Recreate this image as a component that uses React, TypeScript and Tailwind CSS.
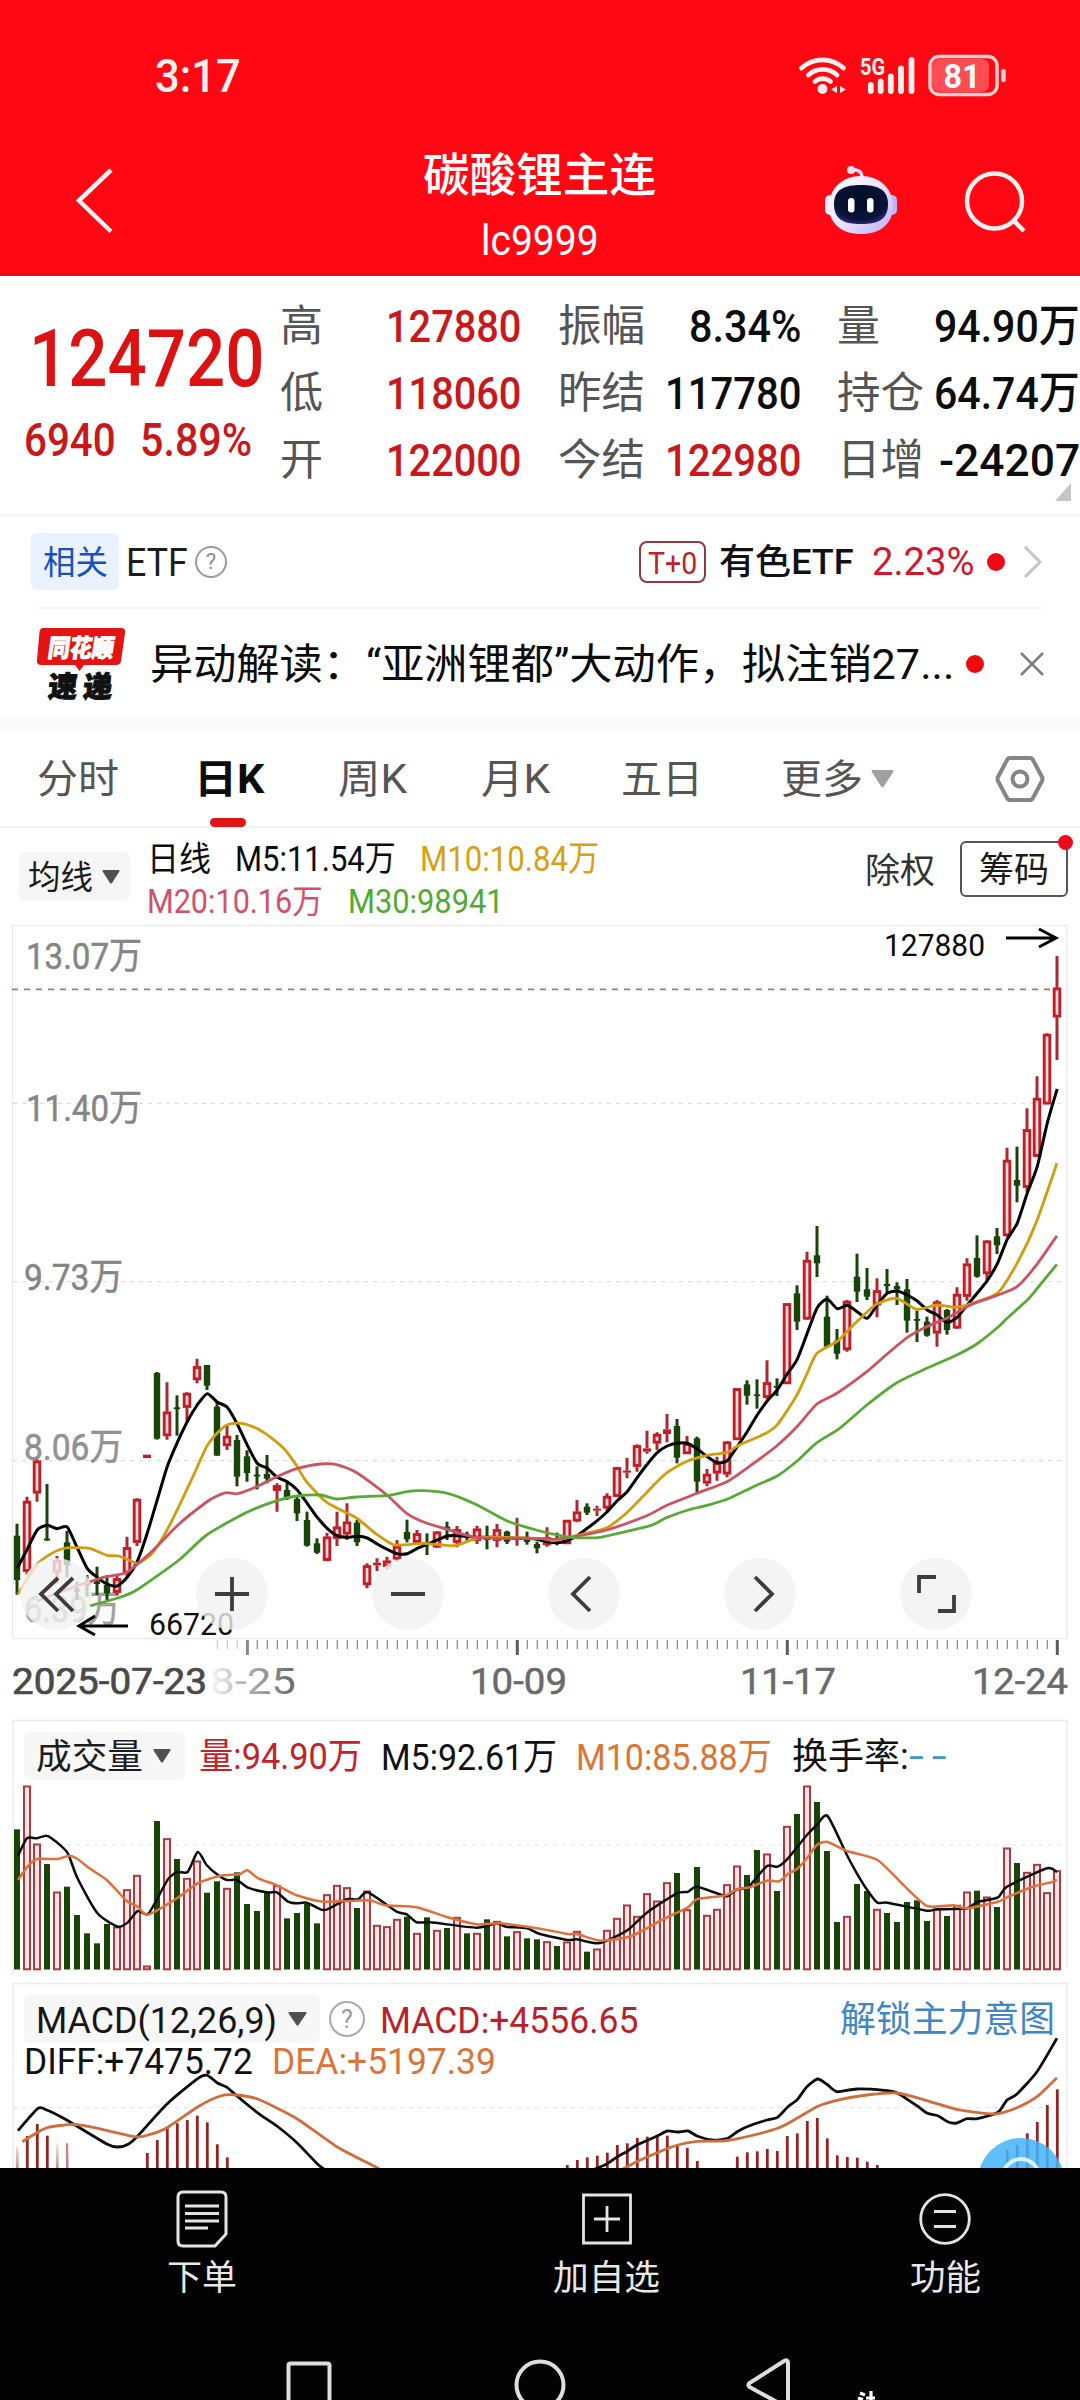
import React, { useLayoutEffect, useRef } from "react";

/** Text squeezed or stretched horizontally to the width given by its classes. */
function Fit({ children, className }: { children: string; className: string }) {
  const outer = useRef<HTMLSpanElement>(null);
  const inner = useRef<HTMLSpanElement>(null);
  useLayoutEffect(() => {
    const o = outer.current;
    const i = inner.current;
    if (o && i && i.offsetWidth > 0) {
      i.style.transform = `translateY(1px) scaleX(${o.clientWidth / i.offsetWidth})`;
    }
  });
  return (
    <span ref={outer} className={`block shrink-0 h-[1em] leading-none ${className}`}>
      <span ref={inner} className="inline-block origin-left whitespace-pre leading-none">
        {children}
      </span>
    </span>
  );
}

/* ---------- chart data ---------- */

type Candle = [string, number, number, number, number];

// colour, high, body top, body bottom, low (third-pixels below y = 1300)
const candles: Candle[] = [
  ["G", 671, 707, 840, 884], ["R", 590, 603, 815, 825], ["R", 478, 482, 580, 605], ["G", 552, 716, 721, 722],
  ["R", 768, 780, 818, 850], ["G", 693, 727, 795, 832], ["G", 845, 868, 875, 900], ["G", 825, 850, 855, 890],
  ["G", 800, 844, 852, 885], ["G", 825, 855, 880, 900], ["R", 825, 835, 878, 885], ["R", 710, 742, 820, 830],
  ["R", 595, 597, 728, 738], ["R", 464, 464, 474, 474], ["G", 216, 219, 416, 419], ["R", 247, 335, 408, 419],
  ["G", 286, 322, 326, 407], ["R", 277, 279, 323, 365], ["R", 176, 199, 240, 250], ["G", 195, 195, 257, 270],
  ["G", 305, 320, 467, 467], ["R", 378, 408, 438, 450], ["G", 405, 420, 530, 559], ["G", 451, 469, 519, 545],
  ["G", 499, 524, 528, 568], ["G", 465, 522, 536, 550], ["R", 550, 556, 572, 635], ["G", 548, 570, 592, 600],
  ["G", 590, 597, 640, 663], ["G", 635, 660, 737, 740], ["G", 715, 730, 758, 762], ["R", 698, 710, 782, 784],
  ["R", 635, 680, 716, 738], ["R", 610, 665, 703, 720], ["G", 660, 668, 727, 738], ["R", 790, 796, 855, 865],
  ["R", 775, 788, 796, 813], ["R", 770, 782, 800, 808], ["R", 720, 738, 778, 785], ["G", 659, 696, 718, 727],
  ["R", 690, 700, 728, 735], ["G", 700, 726, 732, 765], ["R", 693, 695, 742, 744], ["G", 665, 680, 690, 720],
  ["R", 678, 688, 728, 742], ["G", 695, 704, 712, 722], ["R", 677, 686, 722, 732], ["G", 677, 708, 720, 748],
  ["R", 672, 688, 722, 742], ["G", 692, 695, 725, 732], ["R", 653, 712, 720, 737], ["G", 695, 712, 726, 734],
  ["G", 725, 732, 745, 760], ["R", 682, 712, 735, 740], ["G", 698, 722, 730, 736], ["R", 660, 660, 732, 732],
  ["R", 600, 635, 664, 667], ["G", 610, 620, 638, 645], ["R", 617, 626, 632, 648], ["R", 580, 588, 625, 632],
  ["R", 500, 502, 590, 592], ["R", 473, 512, 518, 535], ["R", 433, 436, 500, 515], ["R", 392, 445, 455, 461],
  ["R", 397, 402, 430, 450], ["R", 342, 388, 402, 427], ["G", 357, 378, 473, 490], ["R", 408, 430, 462, 462],
  ["G", 410, 415, 545, 578], ["R", 507, 522, 550, 559], ["R", 470, 487, 520, 542], ["R", 423, 425, 523, 532],
  ["R", 265, 265, 420, 420], ["G", 241, 253, 287, 314], ["G", 238, 283, 287, 326], ["R", 181, 247, 293, 297],
  ["G", 235, 258, 263, 288], ["R", 10, 10, 252, 252], ["G", -44, -20, 65, 90], ["R", -145, -120, 58, 60],
  ["G", -222, -134, -110, -69], ["G", -13, 50, 140, 143], ["G", 87, 122, 161, 178], ["R", 0, 3, 150, 155],
  ["G", -139, -70, -25, 6], ["G", -96, -32, -10, 0], ["R", -65, -29, 15, 52], ["G", -93, -48, -42, -20],
  ["G", -53, -42, -32, 15], ["G", -63, -32, 62, 98], ["G", 32, 57, 62, 126], ["G", 50, 65, 107, 110],
  ["R", 0, 5, 100, 140], ["G", 27, 30, 90, 104], ["R", -38, -18, 85, 87], ["R", -125, -109, -10, 2],
  ["G", -194, -126, -70, -67], ["R", -180, -178, -78, -60], ["G", -216, -191, -164, -138], ["R", -457, -420, -192, -190],
  ["G", -460, -360, -343, -293], ["R", -575, -512, -337, -325], ["R", -671, -606, -430, -428], ["R", -800, -798, -587, -587],
  ["R", -1032, -937, -848, -720],
];

// tops of the volume bars (third-pixels below y = 1710)
const volumes = [
  358, 227, 401, 462, 545, 530, 615, 670, 700, 642, 650, 538, 495, 767, 333, 385, 447, 504, 452, 548, 514, 534, 487, 582,
  603, 548, 526, 625, 609, 582, 640, 553, 525, 532, 594, 542, 645, 649, 627, 620, 669, 622, 660, 654, 621, 670, 669, 628,
  633, 679, 664, 685, 688, 694, 708, 695, 663, 725, 716, 660, 624, 584, 618, 550, 572, 517, 489, 598, 471, 615, 597, 523,
  467, 495, 420, 431, 543, 348, 312, 227, 276, 423, 636, 618, 522, 543, 597, 609, 636, 576, 571, 633, 597, 618, 585, 545,
  542, 560, 591, 413, 459, 486, 462, 547, 481,
];

const histogram: [number, number][] = [
  [0, 1310], [1, 1278], [2, 1242], [3, 1277], [4, 1300], [5, 1300], [13, 1329], [14, 1290], [15, 1254], [16, 1240],
  [17, 1230], [18, 1217], [19, 1237], [20, 1303], [21, 1342], [55, 1365], [56, 1350], [57, 1342], [58, 1337], [59, 1328],
  [60, 1305], [61, 1300], [62, 1284], [63, 1280], [64, 1278], [65, 1277], [66, 1305], [67, 1314], [68, 1353], [72, 1340],
  [73, 1327], [74, 1324], [75, 1317], [76, 1323], [77, 1278], [78, 1270], [79, 1233], [80, 1224], [81, 1285], [82, 1336],
  [83, 1341], [84, 1343], [85, 1355], [86, 1365], [99, 1320], [100, 1305], [101, 1270], [102, 1236], [103, 1185], [104, 1138],
];

const M5 =
  "0:805,1:748,2:690,3:676,4:686,5:681,6:743,7:805,8:832,9:852,10:858,11:832,12:785,13:700,14:600,15:500,16:428,17:365,18:315,19:281,20:306,21:322,22:372,23:435,24:490,25:505,26:532,27:545,28:570,29:610,30:652,31:685,32:707,33:712,34:709,35:714,36:732,37:748,38:761,39:761,40:745,41:733,42:720,43:708,44:707,45:709,46:712,47:712,48:712,49:714,50:715,51:715,52:718,53:725,54:728,55:722,56:707,57:685,58:662,59:635,60:602,61:575,62:533,63:493,64:458,65:438,66:430,67:430,68:447,69:470,70:488,71:482,72:440,73:395,74:345,75:303,76:270,77:222,78:178,79:100,80:23,81:-3,82:26,83:16,84:35,85:55,86:15,87:-20,88:-27,89:-15,90:3,91:30,92:45,93:68,94:52,95:15,96:-20,97:-58,98:-108,99:-182,100:-230,101:-320,102:-400,103:-530,104:-633";

const M10 =
  "52,882;80,835;110,790;135,770;165,752;200,743;260,745;310,766;345,768;385,785;400,790;440,762;480,700;520,618;560,530;600,440;630,400;660,374;700,370;745,385;790,415;830,452;860,495;890,545;950,608;1036,655;1090,700;1145,735;1230,730;1320,737;1400,712;1568,715;1608,722;1668,708;1762,683;1820,638;1868,588;1908,545;1938,517;1998,482;2053,466;2111,457;2148,434;2218,403;2258,373;2314,285;2343,222;2372,160;2430,125;2459,95;2498,55;2546,12;2604,-5;2662,28;2720,15;2778,22;2836,5;2898,-22;2953,-110;3008,-230;3069,-410";
const M20 =
  "107,903;165,880;252,848;300,832;368,817;440,755;520,672;600,606;630,588;659,578;690,581;745,560;804,530;862,506;930,492;978,494;1036,518;1120,582;1181,640;1240,670;1300,688;1384,712;1568,716;1608,718;1668,710;1762,690;1878,647;1938,615;2024,580;2111,545;2168,505;2256,437;2314,380;2372,312;2430,280;2517,215;2575,163;2638,110;2691,80;2749,55;2818,15;2898,-15;2953,-40;3008,-103;3069,-193";
const M30 =
  "262,917;339,895;397,870;520,780;600,705;717,637;804,602;862,588;930,585;978,597;1036,591;1130,586;1181,575;1230,572;1300,580;1384,614;1471,662;1568,693;1658,712;1733,713;1762,708;1878,680;1908,668;1938,652;1998,630;2053,616;2111,598;2188,560;2258,527;2318,480;2372,428;2438,385;2517,315;2604,248;2691,205;2778,165;2836,132;2894,85;2924,55;2983,0;3008,-30;3069,-107";
const V5 =
  "52,438;78,385;107,385;136,377;165,397;197,430;225,505;283,610;342,650;370,638;400,603;430,612;470,540;490,505;514,486;545,486;574,426;600,465;630,493;659,510;688,510;720,533;775,547;804,547;835,574;862,580;891,578;930,598;950,598;1007,568;1040,568;1068,547;1152,605;1181,613;1210,637;1250,637;1384,653;1442,640;1470,650;1530,655;1568,672;1648,690;1675,688;1736,700;1783,682;1828,656;1878,608;1965,550;1998,545;2024,530;2098,556;2113,558;2140,538;2169,535;2183,520;2227,468;2258,470;2288,445;2343,375;2372,345;2403,318;2459,435;2488,490;2518,540;2548,578;2578,578;2691,602;2720,598;2808,595;2836,577;2898,562;2924,530;3040,475;3069,486";
const V10 =
  "52,510;80,470;107,447;168,447;200,437;225,447;260,475;310,510;368,573;400,590;430,614;514,565;574,520;640,497;695,493;718,481;750,505;804,526;862,556;940,575;1068,571;1120,586;1210,592;1300,622;1384,643;1450,640;1568,656;1648,672;1675,672;1743,692;1828,680;1878,655;1930,625;1998,592;2024,568;2108,556;2140,538;2178,532;2227,512;2262,514;2288,492;2314,477;2343,445;2372,405;2403,396;2459,423;2548,450;2628,530;2693,588;2768,586;2808,595;2898,575;2924,562;2998,530;3048,518;3069,510";
const DIFF_A =
  "52,1262;110,1195;136,1200;190,1228;310,1302;342,1311;372,1303;400,1278;485,1182;575,1105;602,1096;630,1118;659,1132;688,1158;750,1210;804,1248;862,1298;925,1365;960,1390";
const DIFF_B =
  "1698,1390;1762,1362;1793,1340;1820,1325;1849,1305;1908,1278;1938,1263;1968,1266;1998,1263;2024,1278;2068,1290;2111,1286;2143,1264;2169,1250;2227,1230;2258,1222;2288,1190;2314,1170;2343,1130;2374,1107;2401,1123;2430,1145;2488,1137;2568,1141;2604,1148;2662,1187;2693,1210;2723,1217;2753,1236;2778,1239;2808,1226;2838,1226;2898,1207;2924,1170;2953,1152;3011,1085;3069,985";
const DEA_A =
  "65,1295;107,1268;140,1252;210,1243;260,1250;390,1280;430,1275;485,1253;575,1190;640,1158;688,1155;750,1168;862,1226;978,1310;1095,1373;1120,1388";
const DEA_B =
  "1790,1388;1849,1355;1908,1328;1968,1305;2024,1294;2098,1293;2143,1286;2258,1255;2314,1225;2372,1190;2430,1171;2517,1155;2604,1149;2662,1163;2778,1198;2888,1212;2953,1193;3011,1160;3069,1103";

type Pt = [number, number];
const K = 2.9037;
const points = (s: string, base: number): Pt[] =>
  s.split(";").map((p) => {
    const [x, y] = p.split(",").map(Number);
    return [x / K, base + y / 3];
  });
const indexed = (s: string, base: number): Pt[] =>
  s.split(",").map((p) => {
    const [i, v] = p.split(":").map(Number);
    return [17.2 + 10 * i, base + v / 3];
  });

function smooth(p: Pt[]) {
  let d = `M${p[0][0].toFixed(1)} ${p[0][1].toFixed(1)}`;
  for (let i = 0; i < p.length - 1; i++) {
    const a = p[Math.max(0, i - 1)];
    const b = p[i];
    const c = p[i + 1];
    const e = p[Math.min(p.length - 1, i + 2)];
    const k = 9;
    d += `C${(b[0] + (c[0] - a[0]) / k).toFixed(1)} ${(b[1] + (c[1] - a[1]) / k).toFixed(1)} ${(c[0] - (e[0] - b[0]) / k).toFixed(1)} ${(c[1] - (e[1] - b[1]) / k).toFixed(1)} ${c[0].toFixed(1)} ${c[1].toFixed(1)}`;
  }
  return d;
}

const Line = ({ pts, color, w = 2.8 }: { pts: Pt[]; color: string; w?: number }) => (
  <path d={smooth(pts)} fill="none" stroke={color} strokeWidth={w} strokeLinejoin="round" />
);

const GREEN = "#184408";
const RED = "#c41c26";

function Label({ x, y, w, size, fill, children }: { x: number; y: number; w: number; size: number; fill: string; children: string }) {
  return (
    <text x={x} y={y} fontSize={size} fill={fill} textLength={w} lengthAdjust="spacingAndGlyphs">
      {children}
    </text>
  );
}

function KLine() {
  return (
    <svg className="block w-[1080px] h-[796px]" viewBox="0 914 1080 796">
      <defs>
        <linearGradient id="fade" gradientUnits="userSpaceOnUse" x1="206" y1="0" x2="290" y2="0">
          <stop offset="0" stopColor="#ffffff" />
          <stop offset="0.35" stopColor="#c4c4c4" />
          <stop offset="1" stopColor="#707070" />
        </linearGradient>
      </defs>
      <rect x="12.5" y="925.5" width="1054.5" height="713" fill="none" stroke="#ebebeb" strokeWidth="1.5" />
      {[1103.3, 1281.7, 1460.7].map((y) => (
        <path key={y} d={`M13 ${y}H1066`} stroke="#dedede" strokeWidth="1.2" strokeDasharray="4 5" />
      ))}
      <path d="M12 989.3H1057" stroke="#9a8068" strokeWidth="1.8" strokeDasharray="6 6" />
      <g stroke="#858585" strokeWidth="0.5">
        <Label x={26} y={969} w={116} size={37} fill="#858585">13.07万</Label>
        <Label x={26} y={1121} w={116} size={37} fill="#858585">11.40万</Label>
        <Label x={24} y={1290} w={99} size={37} fill="#858585">9.73万</Label>
        <Label x={24} y={1460} w={99} size={37} fill="#949494">8.06万</Label>
        <Label x={24} y={1622} w={96} size={37} fill="#a5a5a5">6.39万</Label>
      </g>
      {candles.map(([c, h, t, b, l], i) => {
        const x = 17 + 10 * i;
        const y = (v: number) => 1300 + v / 3;
        const height = Math.max((b - t) / 3, 1.8);
        return c === "G" ? (
          <g key={i} fill={GREEN}>
            <rect x={x - 1.5} y={y(h)} width="3" height={(l - h) / 3} />
            <rect x={x - 3.2} y={y(t)} width="6.4" height={height} />
          </g>
        ) : (
          <g key={i}>
            <path d={`M${x} ${y(h)}V${y(t)}M${x} ${y(b)}V${y(l)}`} stroke="#aa2a30" strokeWidth="3" />
            {height > 5 ? (
              <rect x={x - 2.8} y={y(t) + 1.2} width="5.6" height={height - 2.4} fill="#fbdcdc" stroke={RED} strokeWidth="2.9" />
            ) : (
              <rect x={x - 4} y={y(t)} width="8" height={height} fill={RED} />
            )}
          </g>
        );
      })}
      <Line pts={indexed(M5, 1300)} color="#000" w={3} />
      <Line pts={points(M10, 1300)} color="#d29c0c" />
      <Line pts={points(M20, 1300)} color="#cf5263" />
      <Line pts={points(M30, 1300)} color="#57ab35" />
      <Label x={884} y={956} w={101} size={32} fill="#0a0a0a">127880</Label>
      <path d="M1006 938H1056M1039 929L1056 938L1039 947" fill="none" stroke="#000" strokeWidth="3" />
      <Label x={149} y={1635} w={85} size={32} fill="#111">66720</Label>
      <path d="M128 1626H79M95 1616L79 1626L95 1635" fill="none" stroke="#000" strokeWidth="3" />
      {Array.from({ length: 84 }, (_, k) => {
        const i = k + 20;
        const x = 17.3 + 10 * i;
        return <path key={i} d={`M${x} 1640V1649`} stroke="#858585" strokeWidth="1.2" opacity={i < 23 ? 0.4 : 1} />;
      })}
      <path d="M247.4 1640V1655" stroke="#8a8a8a" strokeWidth="3" />
      <path d="M517.3 1640V1655M787.3 1640V1655M1057.3 1640V1655" stroke="#5c5c5c" strokeWidth="3" />
      <Label x={210} y={1694} w={86} size={36} fill="url(#fade)">8-25</Label>
      <rect x="0" y="1660" width="206" height="40" fill="#fff" />
      <g stroke="#4a4a4a" strokeWidth="0.7">
        <Label x={12} y={1694} w={195} size={36} fill="#4a4a4a">2025-07-23</Label>
      </g>
      <g stroke="#6a6a6a" strokeWidth="0.5">
        <Label x={470} y={1694} w={97} size={36} fill="#6a6a6a">10-09</Label>
        <Label x={740} y={1694} w={96} size={36} fill="#6a6a6a">11-17</Label>
        <Label x={972} y={1694} w={96} size={36} fill="#6a6a6a">12-24</Label>
      </g>
    </svg>
  );
}

function VolumeChart() {
  const base = 1969.5;
  return (
    <svg className="absolute inset-0 w-[1080px] h-[265px]" viewBox="0 1710 1080 265">
      <path d="M13 1976V1720.5H1067V1969" fill="none" stroke="#ebebeb" strokeWidth="1.5" />
      <path d="M13 1845H1066" stroke="#e4e4e4" strokeWidth="1.2" strokeDasharray="4 5" />
      {volumes.map((v, i) => {
        const x = 17 + 10 * i;
        const y = 1710 + v / 3;
        return candles[i][0] === "G" ? (
          <rect key={i} x={x - 3} y={y} width="6" height={base - y} fill={GREEN} />
        ) : (
          <rect key={i} x={x - 3} y={y + 0.8} width="6" height={Math.max(base - y - 1, 2)} fill="#fce4e4" stroke="#ac3a40" strokeWidth="2" />
        );
      })}
      <Line pts={points(V5, 1710)} color="#0c0c0c" w={2.5} />
      <Line pts={points(V10, 1710)} color="#e0703a" w={2.5} />
    </svg>
  );
}

function MacdChart() {
  return (
    <svg className="absolute inset-0 w-[1080px] h-[193px]" viewBox="0 1975 1080 193">
      <defs>
        <linearGradient id="haze" x1="0" y1="0" x2="0" y2="1">
          <stop offset="0" stopColor="#fff" stopOpacity="0.9" />
          <stop offset="1" stopColor="#fff" stopOpacity="0.1" />
        </linearGradient>
      </defs>
      <path d="M13 2168V1983.5H1067V2168" fill="none" stroke="#ebebeb" strokeWidth="1.5" />
      <path d="M13 2107.5H1066" stroke="#e4e4e4" strokeWidth="1.2" strokeDasharray="4 5" />
      {histogram.map(([i, v]) => (
        <path key={i} d={`M${17.3 + 10 * i} ${1710 + v / 3}V2168`} stroke="#932222" strokeWidth="2.8" opacity={i === 4 || i === 5 || i === 0 ? 0.55 : 1} />
      ))}
      <rect x="14" y="2141" width="9" height="27" fill="url(#haze)" />
      <rect x="68" y="2141" width="5" height="27" fill="url(#haze)" />
      <rect x="53" y="2141" width="8" height="27" fill="url(#haze)" />
      <Line pts={points(DIFF_A, 1710)} color="#0c0c0c" />
      <Line pts={points(DIFF_B, 1710)} color="#0c0c0c" />
      <Line pts={points(DEA_A, 1710)} color="#cf6d3c" />
      <Line pts={points(DEA_B, 1710)} color="#cf6d3c" />
      <circle cx="1021" cy="2181" r="43" fill="#43b4fb" fillOpacity="0.86" />
      <circle cx="1021" cy="2177" r="18" fill="none" stroke="#d6eefe" strokeWidth="4" />
      <circle cx="1021" cy="2180" r="10" fill="#6fb6e8" />
    </svg>
  );
}

/* ---------- small drawings ---------- */

const Caret = ({ className }: { className: string }) => (
  <svg viewBox="0 0 18 13" className={className} preserveAspectRatio="none">
    <path d="M1.5 0H16.5Q18.3 0 17.2 1.6L10 12Q9 13.4 8 12L0.8 1.6Q-0.3 0 1.5 0Z" fill="currentColor" />
  </svg>
);

const Help = ({ className }: { className: string }) => (
  <span className={`flex items-center justify-center rounded-full border-2 leading-none ${className}`}>?</span>
);

function StatusIcons() {
  return (
    <svg className="block w-[230px] h-[50px]" viewBox="790 49 230 50" fill="none" stroke="#fff0ee" strokeLinecap="round">
      <path d="M801.5 67A31 31 0 0 1 843.5 67" strokeWidth="4.8" />
      <path d="M808.5 74A21 21 0 0 1 837 74" strokeWidth="4.8" />
      <path d="M815 80.5A12 12 0 0 1 830.5 80.5" strokeWidth="4.8" />
      <circle cx="822.5" cy="88" r="5" fill="#fff0ee" stroke="none" />
      <path d="M837 85V92L831 88.5ZM840 85V92L846 88.5Z" fill="#fff0ee" stroke="none" />
      <text x="860" y="74" fontSize="23" fontWeight="700" fill="#fff0ee" stroke="none" textLength="25" lengthAdjust="spacingAndGlyphs">5G</text>
      <path d="M870.8 84V90M880.7 80.5V90M890.8 75.5V90M901 67.5V90M911.5 59V90" strokeWidth="5.8" />
      <rect x="932" y="58" width="57" height="33" rx="7" fill="#ff4b52" stroke="none" />
      <rect x="930" y="55.5" width="67" height="38" rx="9" strokeWidth="3.4" stroke="#ffd4d2" />
      <path d="M1003.5 70V79" strokeWidth="4.5" stroke="#ffd4d2" />
      <text x="943.5" y="86.5" fontSize="34" fontWeight="700" fill="#fff" stroke="none" textLength="37" lengthAdjust="spacingAndGlyphs">81</text>
    </svg>
  );
}

const Robot = () => (
  <svg className="block w-[76px] h-[70px]" viewBox="823 165 76 70">
    <defs>
      <linearGradient id="head" x1="0" y1="0" x2="1" y2="1">
        <stop offset="0" stopColor="#fff" />
        <stop offset="0.5" stopColor="#eee4fb" />
        <stop offset="1" stopColor="#b9adf3" />
      </linearGradient>
      <radialGradient id="visor" cx="0.5" cy="0.4" r="0.65">
        <stop offset="0" stopColor="#020c26" />
        <stop offset="0.75" stopColor="#081337" />
        <stop offset="1" stopColor="#322c8e" />
      </radialGradient>
    </defs>
    <path d="M850 170Q862 168 862 178" fill="none" stroke="#f6dcf4" strokeWidth="3.5" />
    <circle cx="851" cy="170" r="4" fill="#fbdff0" />
    <rect x="825" y="195" width="12" height="20" rx="5" fill="#f3ecfd" />
    <rect x="885" y="195" width="12" height="20" rx="5" fill="#c3b2f5" />
    <path d="M861 176C880 176 893 189 893 206C893 224 880 234 861 234C842 234 829 224 829 206C829 189 842 176 861 176Z" fill="url(#head)" />
    <path d="M861 185C877 185 888 189 888 204C888 219 879 224 861 224C843 224 834 219 834 204C834 189 845 185 861 185Z" fill="url(#visor)" />
    <rect x="848" y="198" width="6.5" height="14.5" rx="3.2" fill="#fff" />
    <rect x="867" y="198" width="6.5" height="14.5" rx="3.2" fill="#fff" />
  </svg>
);

const Logo = () => (
  <svg className="block w-[92px] h-[94px]" viewBox="36 615 92 94">
    <path d="M43 626H121Q126 626 125 631L121 659Q120.500 663 116 663H84L79.500 669L75 663H42Q36 663 37 658L39.500 630Q40 626 43 626Z" fill="#e31414" />
    <text transform="translate(47 654.5) skewX(-8)" fontSize="25" fontWeight="900" fill="#fff" stroke="#fff" strokeWidth="0.8" textLength="66" lengthAdjust="spacingAndGlyphs">同花顺</text>
    <g fontSize="29" fontWeight="900" fill="#111" stroke="#111" strokeWidth="1">
      <text transform="translate(47.5 694.5) skewX(-5)" textLength="29" lengthAdjust="spacingAndGlyphs">速</text>
      <text transform="translate(82.5 694.5) skewX(-5)" textLength="29" lengthAdjust="spacingAndGlyphs">递</text>
    </g>
  </svg>
);

/* ---------- sections ---------- */

function Header() {
  return (
    <header className="h-[276px] bg-[#ff0814] border-b-2 border-[#d8101a] text-white">
      <div className="h-[150px] flex items-center">
        <Fit className="ml-[155px] w-[86px] text-[46px] font-medium text-[#fff0ee]">3:17</Fit>
        <div className="ml-[549px]"><StatusIcons /></div>
      </div>
      <div className="h-[124px] flex items-start">
        <svg className="mt-[17px] ml-[74px] w-[42px] h-[68px]" viewBox="0 0 42 68" fill="none" stroke="#fff0ee" strokeWidth="4.5">
          <path d="M37 3L5 33.500L37 64.500" />
        </svg>
        <div className="ml-[307px] w-[233px] flex flex-col items-center">
          <Fit className="mt-[1px] w-[233px] text-[46px] font-medium">碳酸锂主连</Fit>
          <Fit className="mt-[21px] w-[118px] text-[43px]">lc9999</Fit>
        </div>
        <div className="ml-[167px] mt-[15px]"><Robot /></div>
        <svg className="ml-[65px] mt-[20px] w-[64px] h-[64px]" viewBox="964 170 64 64" fill="none" stroke="#fff0ee" strokeWidth="4.5">
          <circle cx="994.5" cy="201" r="27.5" />
          <path d="M1013 220L1024 231" />
        </svg>
      </div>
    </header>
  );
}

function Cell({ label, lw, value, vw, red = false }: { label: string; lw: string; value: string; vw: string; red?: boolean }) {
  return (
    <div className="flex items-center justify-between h-[67px]">
      <Fit className={`${lw} text-[43px] text-[#555]`}>{label}</Fit>
      <Fit className={`${vw} text-[45px] font-medium ${red ? "text-[#c9181d]" : "text-[#0d0d0d]"}`}>{value}</Fit>
    </div>
  );
}

function Quote() {
  return (
    <section className="relative h-[240px] flex items-start border-b-2 border-[#f4f4f4]">
      <div className="w-[280px] pt-[43px]">
        <Fit className="ml-[29px] w-[235px] text-[79px] font-medium text-[#dc1212]">124720</Fit>
        <div className="flex mt-[18px]">
          <Fit className="ml-[24px] w-[92px] text-[46px] text-[#c9171b] font-medium">6940</Fit>
          <Fit className="ml-[24px] w-[112px] text-[46px] text-[#c9171b] font-medium">5.89%</Fit>
        </div>
      </div>
      <div className="w-[241px] mt-[16px]">
        <Cell label="高" lw="w-[43px]" value="127880" vw="w-[135px]" red />
        <Cell label="低" lw="w-[43px]" value="118060" vw="w-[135px]" red />
        <Cell label="开" lw="w-[43px]" value="122000" vw="w-[135px]" red />
      </div>
      <div className="w-[243px] ml-[37px] mt-[16px]">
        <Cell label="振幅" lw="w-[87px]" value="8.34%" vw="w-[112px]" />
        <Cell label="昨结" lw="w-[87px]" value="117780" vw="w-[136px]" />
        <Cell label="今结" lw="w-[87px]" value="122980" vw="w-[136px]" red />
      </div>
      <div className="w-[243px] ml-[36px] mt-[16px]">
        <Cell label="量" lw="w-[43px]" value="94.90万" vw="w-[146px]" />
        <Cell label="持仓" lw="w-[87px]" value="64.74万" vw="w-[146px]" />
        <Cell label="日增" lw="w-[87px]" value="-24207" vw="w-[141px]" />
      </div>
      <svg className="absolute right-[9px] top-[207px] w-[16px] h-[18px]" viewBox="0 0 16 18">
        <path d="M16 0V18H0Z" fill="#c6c6c6" />
      </svg>
    </section>
  );
}

function EtfRow() {
  return (
    <section className="h-[91px] flex items-center">
      <div className="ml-[31px] w-[88px] h-[57px] rounded-md bg-[#e9f2fe] flex items-center justify-center">
        <Fit className="w-[65px] text-[33px] text-[#1750c2]">相关</Fit>
      </div>
      <Fit className="ml-[7px] w-[62px] text-[38px] text-[#1c1c1c]">ETF</Fit>
      <Help className="ml-[7px] w-[32px] h-[32px] text-[22px] text-[#8c8c8c] border-[#9a9a9a]" />
      <div className="ml-[412px] w-[67px] h-[42px] rounded-lg border-2 border-[#8e3a40] flex items-center justify-center">
        <Fit className="w-[49px] text-[32px] text-[#c4202c]">T+0</Fit>
      </div>
      <Fit className="ml-[13px] w-[135px] text-[35px] font-medium text-[#111]">有色ETF</Fit>
      <Fit className="ml-[18px] w-[103px] text-[39px] text-[#d5152c]">2.23%</Fit>
      <span className="ml-[12px] w-[18px] h-[18px] rounded-full bg-[#f00a18]" />
      <svg className="ml-[18px] w-[20px] h-[32px]" viewBox="0 0 20 32" fill="none" stroke="#c4c4c4" strokeWidth="3">
        <path d="M2 1L17 16L2 31" />
      </svg>
    </section>
  );
}

function NewsRow() {
  return (
    <section className="h-[111px] flex items-center">
      <div className="ml-[36px]"><Logo /></div>
      <Fit className="ml-[22px] w-[804px] text-[42px] text-[#0c0c0c]">异动解读：“亚洲锂都”大动作，拟注销27...</Fit>
      <span className="ml-[12px] w-[18px] h-[18px] rounded-full bg-[#f00a0a]" />
      <svg className="ml-[36px] w-[24px] h-[24px]" viewBox="0 0 24 24" stroke="#7d7d7d" strokeWidth="2.5">
        <path d="M1 1L23 23M23 1L1 23" />
      </svg>
    </section>
  );
}

function Tabs() {
  const tab = "text-[40px] text-[#555]";
  return (
    <nav className="relative h-[99px] pt-[3px] flex items-center border-b-2 border-[#f1f1f1]">
      <Fit className={`ml-[37px] w-[82px] ${tab}`}>分时</Fit>
      <Fit className="ml-[75px] w-[70px] text-[40px] font-bold text-[#0c0c0c]">日K</Fit>
      <Fit className={`ml-[74px] w-[69px] ${tab}`}>周K</Fit>
      <Fit className={`ml-[74px] w-[69px] ${tab}`}>月K</Fit>
      <Fit className={`ml-[71px] w-[82px] ${tab}`}>五日</Fit>
      <Fit className={`ml-[78px] w-[82px] ${tab}`}>更多</Fit>
      <Caret className="ml-[8px] w-[23px] h-[18px] text-[#a0a0a0]" />
      <svg className="ml-[101px] w-[50px] h-[48px]" viewBox="0 0 50 48" fill="none" stroke="#858585" strokeWidth="4">
        <path d="M15 3H35Q37 3 38 5L47 22Q48 24 47 26L38 43Q37 45 35 45H15Q13 45 12 43L3 26Q2 24 3 22L12 5Q13 3 15 3Z" />
        <circle cx="25" cy="24" r="7.5" />
      </svg>
      <span className="absolute left-[210px] bottom-[-1px] w-[36px] h-[9px] rounded-full bg-[#e01616]" />
    </nav>
  );
}

function MaRow() {
  return (
    <section className="relative h-[86px] flex items-start">
      <div className="mt-[24px] ml-[19px] w-[111px] h-[49px] rounded-md bg-[#f6f6f6] flex items-center">
        <Fit className="ml-[9px] w-[65px] text-[33px] text-[#1c1c1c]">均线</Fit>
        <Caret className="ml-[9px] w-[18px] h-[14px] text-[#505050]" />
      </div>
      <div className="ml-[17px] mt-[13px] w-[461px]">
        <div className="flex">
          <Fit className="w-[64px] text-[34px] text-[#0c0c0c]">日线</Fit>
          <Fit className="ml-[24px] w-[161px] text-[35px] text-[#0c0c0c]">M5:11.54万</Fit>
          <Fit className="ml-[24px] w-[179px] text-[35px] text-[#d9a012]">M10:10.84万</Fit>
        </div>
        <div className="flex mt-[8px]">
          <Fit className="w-[176px] text-[33px] text-[#d35069]">M20:10.16万</Fit>
          <Fit className="ml-[25px] w-[156px] text-[33px] text-[#52aa33]">M30:98941</Fit>
        </div>
      </div>
      <Fit className="ml-[257px] mt-[25px] w-[70px] text-[35px] text-[#333]">除权</Fit>
      <div className="relative ml-[25px] mt-[13px] w-[108px] h-[56px] rounded-md border-2 border-[#555] flex items-center justify-center">
        <Fit className="w-[70px] text-[35px] text-[#1a1a1a]">筹码</Fit>
        <span className="absolute -top-[8px] -right-[7px] w-[15px] h-[15px] rounded-full bg-[#ee0a1c]" />
      </div>
    </section>
  );
}

const controls = [
  <path key="0" d="M38 20L21 36L38 53M53 20L36 36L53 53" />,
  <path key="1" d="M19 36H53M36 19V53" />,
  <path key="2" d="M19 36H53" />,
  <path key="3" d="M42 19L25 36L42 53" />,
  <path key="4" d="M31 19L48 36L31 53" />,
  <path key="5" d="M19 35V19H36M54 37V53H38" />,
];

function BottomBar() {
  const label = "text-[35px] text-[#e8e8e8]";
  return (
    <footer className="bg-[#020202] h-[232px] overflow-hidden">
      <div className="h-[132px] pt-[22px] flex items-start">
        <div className="ml-[167px] w-[70px] flex flex-col items-center">
          <svg className="w-[52px] h-[58px]" viewBox="0 0 52 58" fill="none" stroke="#e4e4e4" strokeWidth="3">
            <path d="M7 2H45Q50 2 50 7V44L39 56H7Q2 56 2 51V7Q2 2 7 2Z" />
            <path d="M9 16H43M9 23.500H43M9 31H43M9 38H32" />
          </svg>
          <Fit className={`mt-[12px] w-[70px] ${label}`}>下单</Fit>
        </div>
        <div className="ml-[316px] w-[107px] flex flex-col items-center">
          <svg className="w-[52px] h-[58px]" viewBox="0 0 52 58" fill="none" stroke="#e4e4e4" strokeWidth="2.8">
            <path d="M2.500 5H49.500V53H2.500ZM26 16V42M13 29H39" />
          </svg>
          <Fit className={`mt-[12px] w-[107px] ${label}`}>加自选</Fit>
        </div>
        <div className="ml-[249px] w-[72px] flex flex-col items-center">
          <svg className="w-[52px] h-[58px]" viewBox="0 0 52 58" fill="none" stroke="#e4e4e4" strokeWidth="2.8">
            <circle cx="26" cy="29" r="24.3" />
            <path d="M15 21.500H37M15 36.500H37" />
          </svg>
          <Fit className={`mt-[12px] w-[71px] ${label}`}>功能</Fit>
        </div>
      </div>
      <svg className="block w-[1080px] h-[100px]" viewBox="0 2300 1080 100" fill="none" stroke="#dedede" strokeWidth="4">
        <rect x="288.5" y="2363.5" width="41" height="42" rx="2" />
        <circle cx="540" cy="2385" r="23.5" />
        <path d="M788 2362V2408L749.500 2387Q747.500 2385 749.500 2383L784 2361Q788 2359 788 2363Z" />
        <path d="M860 2393L865 2395M858 2398L863 2399.500M871 2391V2400M866 2398H875" stroke="#fff" strokeWidth="3.2" />
      </svg>
    </footer>
  );
}

export default function App() {
  return (
    <div className="w-[1080px] h-[2400px] overflow-hidden bg-white font-[Roboto,'Noto_Sans_CJK_SC',sans-serif]">
      <Header />
      <Quote />
      <EtfRow />
      <div className="mx-[38px] h-[2px] -mb-[1px] bg-[#f6f6f6]" />
      <NewsRow />
      <div className="h-[10px] bg-[#fafafa]" />
      <Tabs />
      <MaRow />
      <section className="relative h-[796px]">
        <KLine />
        <div className="absolute left-[20px] top-[644px] flex gap-[104px]">
          {controls.map((icon, i) => (
            <svg key={i} className="w-[72px] h-[72px] rounded-full bg-[#f1f1f1]/80" viewBox="0 0 72 72" fill="none" stroke="#3c3c3c" strokeWidth="3.8">
              {icon}
            </svg>
          ))}
        </div>
      </section>
      <section className="relative h-[265px]">
        <VolumeChart />
        <div className="relative pt-[22px] flex items-center">
          <div className="ml-[24px] w-[161px] h-[48px] rounded-md bg-[#f7f7f7] flex items-center">
            <Fit className="ml-[12px] w-[107px] text-[35px] text-[#1c1c1c]">成交量</Fit>
            <Caret className="ml-[10px] w-[18px] h-[14px] text-[#505050]" />
          </div>
          <Fit className="ml-[14px] w-[163px] text-[36px] text-[#c4222a]">量:94.90万</Fit>
          <Fit className="ml-[19px] w-[176px] text-[37px] text-[#111]">M5:92.61万</Fit>
          <Fit className="ml-[19px] w-[196px] text-[37px] text-[#dc7434]">M10:85.88万</Fit>
          <Fit className="ml-[20px] w-[117px] text-[36px] text-[#111]">换手率:</Fit>
          <Fit className="w-[46px] text-[36px] tracking-[0.15em] text-[#3d94c8]">--</Fit>
        </div>
      </section>
      <section className="relative h-[193px]">
        <MacdChart />
        <div className="relative pt-[20px] flex items-center">
          <div className="ml-[24px] w-[296px] h-[48px] rounded-md bg-[#f7f7f7] flex items-center">
            <Fit className="ml-[12px] w-[241px] text-[37px] text-[#161616]">MACD(12,26,9)</Fit>
            <Caret className="ml-[11px] w-[19px] h-[14px] text-[#505050]" />
          </div>
          <Help className="ml-[9px] w-[36px] h-[36px] text-[25px] text-[#9a9a9a] border-[#aaa]" />
          <Fit className="ml-[15px] w-[258px] text-[37px] text-[#bb1f2a]">MACD:+4556.65</Fit>
          <Fit className="ml-[202px] w-[215px] text-[36px] text-[#3f86c6]">解锁主力意图</Fit>
        </div>
        <div className="relative mt-[-1px] flex">
          <Fit className="ml-[24px] w-[229px] text-[37px] text-[#111]">DIFF:+7475.72</Fit>
          <Fit className="ml-[19px] w-[224px] text-[37px] text-[#d9743a]">DEA:+5197.39</Fit>
        </div>
      </section>
      <BottomBar />
    </div>
  );
}
